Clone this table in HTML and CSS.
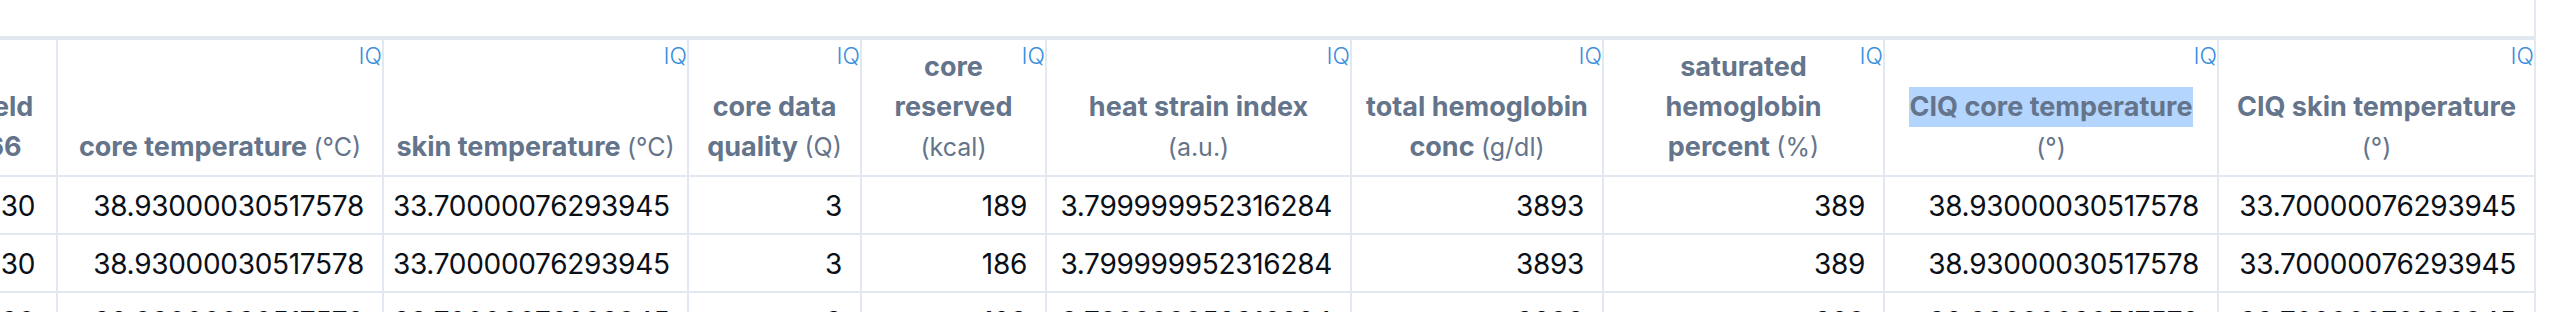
FILE: index.html
```html
<!DOCTYPE html>
<html lang="en">
<head>
<meta charset="utf-8">
<title>Sensor table</title>
<link rel="stylesheet" href="styles.css">
</head>
<body>
<div class="grid-view">
  <div class="toolbar"></div>
  <div class="table-clip">
    <table class="data-table">
      <colgroup>
        <col class="w-field">
        <col class="w-core">
        <col class="w-skin">
        <col class="w-quality">
        <col class="w-reserved">
        <col class="w-strain">
        <col class="w-hemo">
        <col class="w-sat">
        <col class="w-ciq-core">
        <col class="w-ciq-skin">
      </colgroup>
      <thead>
        <tr>
          <th class="col-field">field 66</th>
          <th><span class="iq">IQ</span>core temperature <span class="unit">(°C)</span></th>
          <th><span class="iq">IQ</span>skin temperature <span class="unit">(°C)</span></th>
          <th><span class="iq">IQ</span>core data<br>quality <span class="unit">(Q)</span></th>
          <th><span class="iq">IQ</span>core<br>reserved<br><span class="unit">(kcal)</span></th>
          <th><span class="iq">IQ</span>heat strain index<br><span class="unit">(a.u.)</span></th>
          <th><span class="iq">IQ</span>total hemoglobin<br>conc <span class="unit">(g/dl)</span></th>
          <th><span class="iq">IQ</span>saturated<br>hemoglobin<br>percent <span class="unit">(%)</span></th>
          <th><span class="iq">IQ</span><span class="selected">CIQ core temperature</span><br><span class="unit">(°)</span></th>
          <th><span class="iq">IQ</span>CIQ skin temperature<br><span class="unit">(°)</span></th>
        </tr>
      </thead>
      <tbody>
        <tr>
          <td class="col-field">130</td>
          <td>38.93000030517578</td>
          <td>33.70000076293945</td>
          <td>3</td>
          <td>189</td>
          <td>3.799999952316284</td>
          <td>3893</td>
          <td>389</td>
          <td>38.93000030517578</td>
          <td>33.70000076293945</td>
        </tr>
        <tr>
          <td class="col-field">130</td>
          <td>38.93000030517578</td>
          <td>33.70000076293945</td>
          <td>3</td>
          <td>186</td>
          <td>3.799999952316284</td>
          <td>3893</td>
          <td>389</td>
          <td>38.93000030517578</td>
          <td>33.70000076293945</td>
        </tr>
        <tr>
          <td class="col-field">130</td>
          <td>38.93000030517578</td>
          <td>33.70000076293945</td>
          <td>3</td>
          <td>183</td>
          <td>3.799999952316284</td>
          <td>3893</td>
          <td>389</td>
          <td>38.93000030517578</td>
          <td>33.70000076293945</td>
        </tr>
      </tbody>
    </table>
  </div>
</div>
</body>
</html>
```

FILE: styles.css
```css
html, body {
  margin: 0;
  padding: 0;
  background: #ffffff;
}

body {
  font-family: Inter, "Noto Sans", "DejaVu Sans", sans-serif;
}

.grid-view {
  width: 2534px;
  height: 312px;
  border-right: 2px solid #e2e8f0;
  overflow: hidden;
}

.toolbar {
  height: 36px;
  border-bottom: 4px solid #e2e8f0;
}

.table-clip {
  overflow: hidden;
}

.data-table {
  table-layout: fixed;
  width: 2582px;
  margin-left: -48px;
  border-collapse: separate;
  border-spacing: 0;
}

.w-field { width: 106px; }
.w-core { width: 326px; }
.w-skin { width: 305px; }
.w-quality { width: 173px; }
.w-reserved { width: 185px; }
.w-strain { width: 305px; }
.w-hemo { width: 252px; }
.w-sat { width: 281px; }
.w-ciq-core { width: 334px; }
.w-ciq-skin { width: 315px; }

.data-table th,
.data-table td {
  border-right: 2px solid #e2e8f0;
  border-bottom: 2px solid #e2e8f0;
}

.data-table th:last-child,
.data-table td:last-child {
  border-right: 0;
}

.data-table thead tr {
  height: 137px;
}

.data-table th {
  position: relative;
  padding: 7px 6px 8px;
  vertical-align: bottom;
  text-align: center;
  white-space: nowrap;
  color: #64748b;
  font-size: 27px;
  font-weight: 700;
  line-height: 40px;
}

.data-table th.col-field {
  white-space: normal;
}

.unit {
  font-weight: 400;
  font-size: 25px;
}

.iq {
  position: absolute;
  top: 5px;
  right: 0;
  font-size: 23px;
  font-weight: 300;
  line-height: 1;
  color: #3b8fdd;
}

.selected {
  display: inline-block;
  background: #b4d5fe;
}

.data-table tbody tr {
  height: 58px;
}

.data-table td {
  padding: 2px 18px 0 9px;
  text-align: right;
  vertical-align: middle;
  white-space: nowrap;
  font-size: 28px;
  letter-spacing: -0.3px;
  font-weight: 400;
  color: #0b0f17;
}

.data-table td.col-field {
  padding-right: 21px;
}
```
